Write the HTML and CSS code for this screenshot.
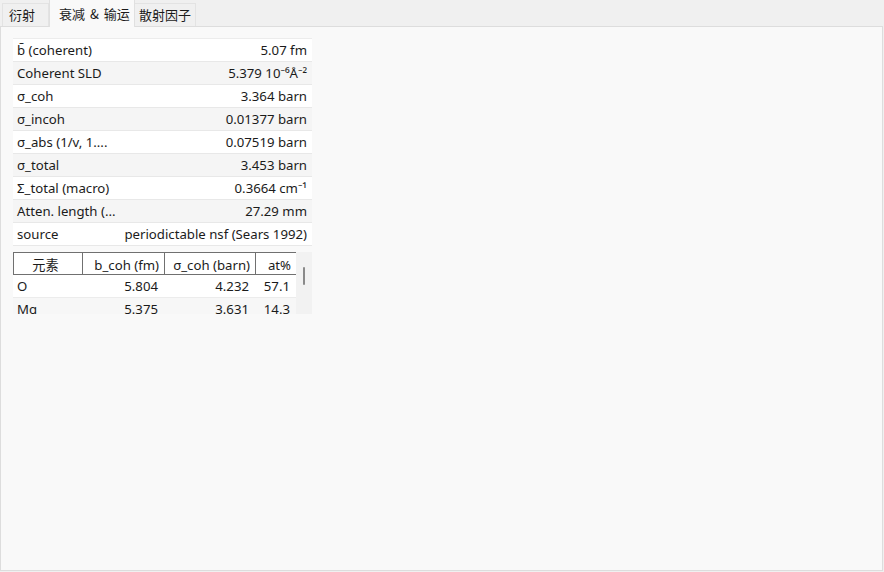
FILE: index.html
```html
<!DOCTYPE html>
<html lang="zh-CN">
<head>
  <meta charset="UTF-8" />
  <title>衰减 & 输运</title>
  <link rel="stylesheet" href="styles.css">
</head>
<body>
  <div class="tabs">
    <div class="tab">衍射</div>
    <div class="tab active">衰减 &amp; 输运</div>
    <div class="tab">散射因子</div>
  </div>

  <div class="pane">
    <!-- 属性表 -->
    <div class="props">
      <div class="row"><span class="key">b̄ (coherent)</span><span class="val">5.07 fm</span></div>
      <div class="row"><span class="key">Coherent SLD</span><span class="val">5.379 10⁻⁶Å⁻²</span></div>
      <div class="row"><span class="key">σ_coh</span><span class="val">3.364 barn</span></div>
      <div class="row"><span class="key">σ_incoh</span><span class="val">0.01377 barn</span></div>
      <div class="row"><span class="key">σ_abs (1/v, 1....</span><span class="val">0.07519 barn</span></div>
      <div class="row"><span class="key">σ_total</span><span class="val">3.453 barn</span></div>
      <div class="row"><span class="key">Σ_total (macro)</span><span class="val">0.3664 cm⁻¹</span></div>
      <div class="row"><span class="key">Atten. length (...</span><span class="val">27.29 mm</span></div>
      <div class="row"><span class="key">source</span><span class="val">periodictable nsf (Sears 1992)</span></div>
    </div>

    <!-- 元素表 -->
    <div class="elements">
      <div class="grid">
        <div class="head">
          <div class="cell center">元素</div>
          <div class="cell">b_coh (fm)</div>
          <div class="cell">σ_coh (barn)</div>
          <div class="cell">at%</div>
        </div>
        <div class="line">
          <div class="cell left">O</div>
          <div class="cell">5.804</div>
          <div class="cell">4.232</div>
          <div class="cell">57.1</div>
        </div>
        <div class="line">
          <div class="cell left">Mg</div>
          <div class="cell">5.375</div>
          <div class="cell">3.631</div>
          <div class="cell">14.3</div>
        </div>
      </div>
      <div class="scrollbar"><div class="thumb"></div></div>
    </div>
  </div>
</body>
</html>
```

FILE: styles.css
```css
body {
  margin: 0;
  background-color: #f0f0f0;
  color: #1b1b1b;
  font-family: "Noto Sans", "Noto Sans CJK SC", sans-serif;
  font-size: 13.2px;
}

.tabs {
  display: flex;
  align-items: flex-end;
  height: 26px;
  padding-left: 2px;
}

.tab {
  height: 22px;
  line-height: 22px;
  padding: 0 6px;
  font-family: "Noto Sans CJK SC", sans-serif;
  font-size: 13px;
  border: 1px solid #e3e3e3;
  border-bottom: none;
  background-color: #f0f0f0;
  box-sizing: content-box;
}

.tab:first-child {
  width: 33px;
}

.tab.active {
  height: 27px;
  line-height: 28px;
  width: 75px;
  padding: 0 0 0 9px;
  background-color: #f9f9f9;
  border-color: #e0e0e0;
  position: relative;
  margin-bottom: -1px;
  z-index: 1;
  word-spacing: 2px;
}

.tab:last-child {
  padding: 0 4px;
  border-left: none;
}

.pane {
  height: 532px;
  width: 869px;
  background-color: #f9f9f9;
  border: 1px solid #dddddd;
  padding: 11px 0 0 12px;
}

.props {
  width: 299px;
  background-color: #fff;
  border-top: 1px solid #ececec;
}

.row {
  display: flex;
  justify-content: space-between;
  height: 22px;
  line-height: 22px;
  padding: 0 5px 0 4px;
  border-bottom: 1px solid #e8e8e8;
  white-space: nowrap;
}

.row:nth-child(even) {
  background-color: #f5f5f5;
}

.elements {
  display: flex;
  width: 299px;
  height: 62px;
  margin-top: 6px;
  overflow: hidden;
}

.grid {
  width: 283px;
  background-color: #fff;
}

.head,
.line {
  display: grid;
  grid-template-columns: 69px 82px 91px 41px;
}

.head {
  height: 21px;
  border: 1px solid #707070;
  border-right: none;
}

.head .cell {
  border-right: 1px solid #707070;
  line-height: 18px;
  padding: 3px 5px 0 0;
}

.line {
  height: 22px;
  line-height: 22px;
  border-bottom: 1px solid #ececec;
}

.line:nth-child(odd) {
  background-color: #f7f7f7;
}

.cell {
  text-align: right;
  padding-right: 6px;
  white-space: nowrap;
  overflow: hidden;
}

.cell.center {
  text-align: center;
  font-family: "Noto Sans CJK SC", sans-serif;
}

.cell.left {
  text-align: left;
  padding-left: 4px;
}

.scrollbar {
  width: 16px;
  background-color: #f2f2f2;
  position: relative;
}

.thumb {
  position: absolute;
  left: 7px;
  top: 15px;
  width: 2px;
  height: 18px;
  border-radius: 1px;
  background-color: #8a8a8a;
}
```
